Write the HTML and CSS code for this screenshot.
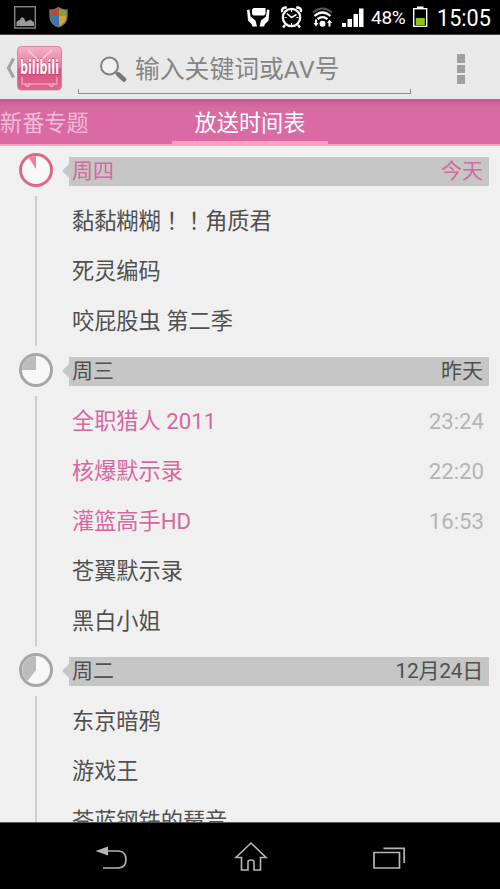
FILE: index.html
```html
<!DOCTYPE html>
<html lang="zh-CN">
<head>
<meta charset="utf-8">
<title>放送时间表</title>
<link rel="stylesheet" href="styles.css">
</head>
<body>
<div class="screen">
  <header class="status">
    <svg width="80" height="34" viewBox="0 0 80 34">
      <rect x="14.700" y="6.700" width="20.600" height="21.300" fill="#080808" stroke="#858585" stroke-width="1.400"/>
      <path d="M16.500 26v-4q2-2.500 3.500-2 .5-3.500 3-2.500 2 .5 2 3.500l1.500 1q1-2 2.500-1.500 1.500-1.500 3 .5 2 0 2 2.500v2.500z" fill="#9a9a9a"/>
      <clipPath id="shield"><path d="M58.500 7.500q4 3 8.500 2.500v6q0 8-8.500 11-8.500-3-8.500-11v-6q4.500.5 8.500-2.500z"/></clipPath>
      <g clip-path="url(#shield)"><path d="M49 7h10v9H49z" fill="#bd4b2b"/><path d="M59 7h9v9h-9z" fill="#7fa53c"/><path d="M49 16h10v12H49z" fill="#3977ae"/><path d="M59 16h9v12h-9z" fill="#d5a72e"/></g>
      <path d="M58.500 7.500q4 3 8.500 2.500v6q0 8-8.500 11-8.500-3-8.500-11v-6q4.500.5 8.500-2.500z" fill="none" stroke="#777" stroke-width="1.300"/>
    </svg>
    <svg class="status-icons" width="125" height="34" viewBox="245 0 125 34">
      <path d="M253.500 8h12v6l-1.500 1.500h-10.500l-1.500-1.500v-4.500z" fill="#fff"/>
      <path d="M247 10l2.500-.5 1 7 5 4 1.500 6h-4.500l-1-2.500-3.500-3.500zM269.500 10l-2.500-.5-1 7-5 4-1.500 6h4.500l1-2.500 3.500-3.500z" fill="#fff"/>
      <circle cx="291.500" cy="17.500" r="8.700" fill="none" stroke="#fff" stroke-width="2.200"/>
      <path d="M282.300 12q-1.500-4.500 4.500-4.500M300.700 12q1.500-4.500-4.500-4.500M285 25l-2 2.500M298 25l2 2.500" fill="none" stroke="#fff" stroke-width="2.400"/>
      <path d="M287 13.500l4.500 4 5-3" fill="none" stroke="#fff" stroke-width="1.500"/>
      <path d="M291.500 10v2M291.500 23v2M284.500 17.500h2M296.500 17.500h2" stroke="#fff"/>
      <path d="M313 12.500q9.500-8 19 0" fill="none" stroke="#555" stroke-width="2"/>
      <path d="M314.500 16q8-7 16 0M317.500 19.200q5-4 10 0" fill="none" stroke="#fff" stroke-width="2.200"/>
      <circle cx="322.500" cy="23.700" r="3" fill="#fff"/>
      <path d="M313.500 23l2.500 3.500 2.500-3.500h-1.500v-3.500h-2V23zM327 23l2.500-3.500 2.500 3.500h-1.500v3.500h-2V23z" fill="#fff"/>
      <path d="M342 23h4v4h-4zM347.500 19h4.500v8h-4.500zM353.500 14h4.500v13h-4.500zM359 8.500h4.500V27H359z" fill="#fff"/>
    </svg>
    <span class="battery-text">48%</span>
    <svg width="16" height="34" viewBox="412 0 16 34">
      <rect x="413.700" y="8.700" width="13" height="17.600" fill="#000" stroke="#fff" stroke-width="1.400"/>
      <path d="M417 6.500h6.500V9H417z" fill="#fff"/><path d="M415.800 18h9v7h-9z" fill="#8cc51e"/>
    </svg>
    <time class="clock">15:05</time>
  </header>

  <div class="appbar">
    <svg width="64" height="64" viewBox="0 35 64 64">
      <defs>
        <linearGradient id="pink" x1="0" y1="0" x2="0" y2="1"><stop offset="0" stop-color="#f4b2c7"/><stop offset=".48" stop-color="#e5799e"/><stop offset=".52" stop-color="#d9507f"/><stop offset="1" stop-color="#dc6792"/></linearGradient>
      </defs>
      <path d="M13.500 58.500L8.500 68l5 9.500" fill="none" stroke="#a3a3a3" stroke-width="3.200"/>
      <rect x="17.500" y="46.500" width="44" height="43.500" rx="4" fill="url(#pink)" stroke="#c87a95" stroke-width=".8"/>
      <path d="M37 59L28 50M42 59l10-9" stroke="#f9cfdc" stroke-width="1.600"/>
      <path d="M22 77v7h35v-7" fill="none" stroke="#f29ab8" stroke-width="1.500"/>
      <path d="M25 84q2 5 5 0M49 84q2 5 5 0" fill="none" stroke="#f5a9c3" stroke-width="1.500"/>
      <text class="logo-text" x="20" y="74" textLength="39" lengthAdjust="spacingAndGlyphs">bilibili</text>
    </svg>
    <div class="search">
      <svg width="28" height="28" viewBox="99 56 28 28"><circle cx="109.500" cy="67" r="8.500" fill="#f0f0f0" stroke="#828282" stroke-width="2"/><path d="M115.500 73l2.500 2.500" stroke="#828282" stroke-width="2.500"/><path d="M118.500 75.500l5.500 5" stroke="#777" stroke-width="4.600" stroke-linecap="round"/></svg>
      <span>输入关键词或AV号</span>
    </div>
    <div class="more"><i></i><i></i><i></i></div>
  </div>

  <nav class="tabs">
    <span class="tab-prev">新番专题</span>
    <span class="tab-active">放送时间表</span>
  </nav>

  <main class="list">
    <section class="day today">
      <svg class="dial" width="36" height="36" viewBox="-18 -18 36 36"><circle r="15.500"/><path d="M0-1V-14A14 14 0 0 0-7-12z"/></svg>
      <div class="day-head"><span>周四</span><span>今天</span></div>
      <div class="rail"></div>
      <ul><li><span>黏黏糊糊<span class="mark" lang="zh-TW">！！</span>角质君</span></li><li>死灵编码</li><li>咬屁股虫 第二季</li></ul>
    </section>
    <section class="day">
      <svg class="dial" width="36" height="36" viewBox="-18 -18 36 36"><circle r="15.500"/><path d="M0 0V-14A14 14 0 0 0-14 0z"/></svg>
      <div class="day-head"><span>周三</span><span>昨天</span></div>
      <div class="rail"></div>
      <ul><li class="aired">全职猎人 2011<time>23:24</time></li><li class="aired">核爆默示录<time>22:20</time></li><li class="aired">灌篮高手HD<time>16:53</time></li><li>苍翼默示录</li><li>黑白小姐</li></ul>
    </section>
    <section class="day">
      <svg class="dial" width="36" height="36" viewBox="-18 -18 36 36"><circle r="15.500"/><path d="M0 0V-14A14 14 0 0 0-8.500 11z"/></svg>
      <div class="day-head"><span>周二</span><span class="date">12月24日</span></div>
      <div class="rail"></div>
      <ul><li>东京暗鸦</li><li>游戏王</li><li>苍蓝钢铁的琶音</li></ul>
    </section>
  </main>

  <footer class="navbar">
    <svg width="34" height="28" viewBox="95 844 34 28"><path d="M107 852h12q7 1 7 8.500t-7 8.500h-16" fill="none" stroke="#b5b5b5" stroke-width="1.700"/><path d="M95.500 852l12.500-4.500v9z" fill="#b5b5b5"/></svg>
    <svg width="34" height="32" viewBox="233 840 34 32"><path d="M250 842l-15 14.500h5.500V869h6.500v-8q0-2 3-2t3 2v8h6.500v-12.500h5.500z" fill="none" stroke="#b5b5b5" stroke-width="1.600"/></svg>
    <svg width="34" height="28" viewBox="372 844 34 28"><path d="M374 853.500h25.500V869H374zM383.500 849.300h20.700V864" fill="none" stroke="#b5b5b5" stroke-width="1.700"/></svg>
  </footer>
</div>
</body>
</html>
```
FILE: styles.css
```css
* { box-sizing: border-box; }
body { margin: 0; background: #000; font-family: Roboto, "Noto Sans CJK SC", sans-serif; }
.screen { width: 500px; height: 889px; display: flex; flex-direction: column; overflow: hidden; }
svg { display: block; flex: none; }

.status { height: 35px; flex: none; display: flex; color: #fff; background: #000; border-bottom: 1px solid #444; }
.status-icons { margin-left: 165px; }
.battery-text { width: 42px; padding-left: 1px; font-size: 19px; line-height: 36px; letter-spacing: -.3px; }
.clock { margin-left: 9px; font-size: 24px; line-height: 36px; transform: scaleX(.9); transform-origin: left; }

.appbar { height: 64px; flex: none; display: flex; background: #e9e9e9; }
.logo-text { font: 700 19px "Open Sans", sans-serif; fill: #fff; stroke: #b93767; stroke-width: 1px; paint-order: stroke; }
.search { display: flex; align-items: center; width: 333px; height: 59px; margin-left: 14px; padding: 10px 0 0 21px; gap: 8px; font-size: 24.800px; line-height: 40px; color: #858585; border-bottom: 1px solid #8c8c8c;
  background: linear-gradient(#8c8c8c, #8c8c8c) left bottom / 1px 4px no-repeat, linear-gradient(#8c8c8c, #8c8c8c) right bottom / 1px 4px no-repeat; }
.search span { white-space: nowrap; padding-top: 2px; }
.more { display: flex; flex-direction: column; gap: 2px; padding-top: 19px; margin-left: 46px; }
.more i { width: 8px; height: 8.500px; background: #a0a0a0; }

.tabs { height: 47px; flex: none; display: flex; font-size: 22.200px; line-height: 49px; background: linear-gradient(#c55b94, #d96aa4 9px); border-bottom: 2px solid #f5a2c5; }
.tab-prev { width: 172px; color: #f1bad5; }
.tab-active { width: 156px; height: 45px; text-align: center; color: #fff; border-bottom: 3px solid #ff9ec3; }

.list { flex: 1; min-height: 0; overflow: hidden; color: #505050; background: #f0f0f0; font-size: 22.200px; }
.day { display: grid; grid-template-columns: 69px 420px; grid-template-rows: 50px auto; }
.dial { margin: 6px 0 0 18px; fill: #bcbcbc; }
.dial circle { fill: #f8f8f8; stroke: #a6a6a6; stroke-width: 3px; }
.today .dial { fill: #ef7d9f; }
.today .dial circle { stroke: #dc6888; }
.day-head { position: relative; display: flex; justify-content: space-between; height: 29px; margin-top: 10.500px; padding: 0 6px 0 3px; line-height: 28px; font-size: 21px; background: #c6c6c6; }
.day-head::before { content: ""; position: absolute; left: -7px; top: 7px; border: solid transparent; border-width: 7px 7px 7px 0; border-right-color: #c6c6c6; }
.today .day-head { color: #d668a0; }
.date { letter-spacing: -.3px; }
.rail { width: 2px; margin-left: 35px; background: #cdcdcd; }
ul { list-style: none; margin: 0; padding: 0 5px 0 3px; }
li { display: flex; justify-content: space-between; height: 50px; line-height: 50.500px; white-space: pre; }
.mark { font-family: "Noto Sans CJK TC", sans-serif; line-height: 1; }
.aired { color: #d668a0; }
li time { color: #b5b5b5; }

.navbar { height: 67px; flex: none; display: flex; align-items: center; justify-content: space-between; padding: 2px 94px 0 95px; background: #000; border-top: 1px solid #555; }
```
